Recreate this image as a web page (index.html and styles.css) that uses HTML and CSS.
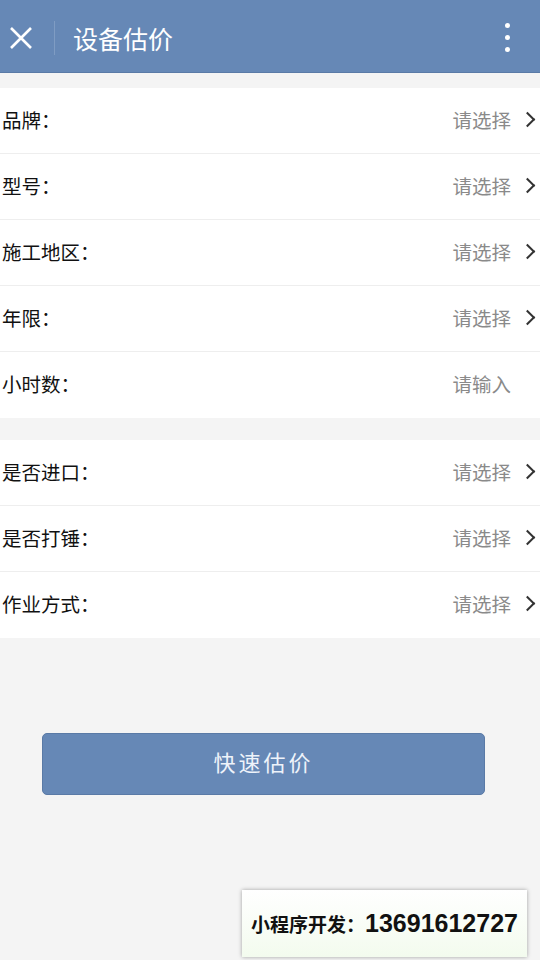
FILE: index.html
```html
<!DOCTYPE html>
<html lang="zh-CN">
<head>
  <meta charset="UTF-8" />
  <title>设备估价</title>
  <meta name="viewport" content="width=device-width, initial-scale=1.0" />
  <link rel="stylesheet" href="styles.css">
</head>
<body>

  <!-- ヘッダー -->
  <div class="header-bar">
    <svg class="close-icon" width="24" height="24" viewBox="0 0 24 24">
      <path d="M2 2 L22 22 M22 2 L2 22" stroke="#fff" stroke-width="2.6" fill="none" />
    </svg>
    <div class="header-divider"></div>
    <div class="header-title">设备估价</div>
    <div class="more-dots"><span></span><span></span><span></span></div>
  </div>

  <!-- フォーム -->
  <div class="form-group">
    <div class="form-row"><span class="label">品牌：</span><span class="value">请选择</span><span class="arrow"></span></div>
    <div class="form-row"><span class="label">型号：</span><span class="value">请选择</span><span class="arrow"></span></div>
    <div class="form-row"><span class="label">施工地区：</span><span class="value">请选择</span><span class="arrow"></span></div>
    <div class="form-row"><span class="label">年限：</span><span class="value">请选择</span><span class="arrow"></span></div>
    <div class="form-row"><span class="label">小时数：</span><span class="value input-hint">请输入</span></div>
  </div>

  <div class="form-group">
    <div class="form-row"><span class="label">是否进口：</span><span class="value">请选择</span><span class="arrow"></span></div>
    <div class="form-row"><span class="label">是否打锤：</span><span class="value">请选择</span><span class="arrow"></span></div>
    <div class="form-row"><span class="label">作业方式：</span><span class="value">请选择</span><span class="arrow"></span></div>
  </div>

  <div class="btn-wrap">
    <div class="submit-button">快速估价</div>
  </div>

  <div class="contact-badge">
    <span class="contact-label">小程序开发：</span><span class="contact-number">13691612727</span>
  </div>

</body>
</html>
```

FILE: styles.css
```css
body {
  margin: 0;
  height: 960px;
  background-color: #f4f4f4;
  font-family: "Noto Sans CJK SC", "Noto Sans", sans-serif;
  position: relative;
  overflow: hidden;
}

.header-bar {
  height: 73px;
  background-color: #6688b6;
  display: flex;
  align-items: center;
  box-sizing: border-box;
  border-bottom: 1px solid #5a7aa6;
  padding-top: 3px;
}

.close-icon {
  margin-left: 9px;
  flex-shrink: 0;
}

.header-divider {
  width: 1px;
  height: 34px;
  background-color: #7f9cc3;
  margin-left: 21px;
}

.header-title {
  color: #fff;
  font-size: 25px;
  margin-left: 18px;
  flex: 1;
}

.more-dots {
  display: flex;
  flex-direction: column;
  gap: 7px;
  margin-right: 30px;
}

.more-dots span {
  width: 5px;
  height: 5px;
  border-radius: 50%;
  background-color: #fff;
}

.form-group {
  background-color: #fff;
  margin-top: 15px;
}

.form-group + .form-group {
  margin-top: 22px;
}

.form-row {
  height: 66px;
  display: flex;
  align-items: center;
  padding: 0 3px 3px 2px;
  border-bottom: 1px solid #eeeeee;
  box-sizing: border-box;
}

.form-row:last-child {
  border-bottom: none;
}

.label {
  font-size: 19.5px;
  color: #111;
  flex: 1;
}

.value {
  font-size: 19.5px;
  color: #8a8a8a;
}

.input-hint {
  margin-right: 26px;
}

.arrow {
  width: 9px;
  height: 9px;
  border-top: 2px solid #333;
  border-right: 2px solid #333;
  transform: rotate(45deg);
  margin-left: 11px;
  margin-right: 4px;
}

.btn-wrap {
  padding: 95px 55px 0 42px;
}

.submit-button {
  height: 62px;
  background-color: #6688b6;
  border: 1px solid #5a7aa6;
  border-radius: 5px;
  box-sizing: border-box;
  color: #eef3fa;
  font-size: 22px;
  letter-spacing: 3px;
  padding-bottom: 6px;
  display: flex;
  align-items: center;
  justify-content: center;
}

.contact-badge {
  position: absolute;
  left: 242px;
  top: 890px;
  width: 285px;
  height: 67px;
  box-sizing: border-box;
  background: linear-gradient(#ffffff, #f3fbee);
  box-shadow: 0 0 4px rgba(0, 0, 0, 0.35);
  display: flex;
  align-items: center;
  justify-content: center;
  color: #111;
  font-weight: bold;
}

.contact-label {
  font-size: 19px;
}

.contact-number {
  font-family: "Liberation Sans", Arial, sans-serif;
  font-size: 25px;
}
```
